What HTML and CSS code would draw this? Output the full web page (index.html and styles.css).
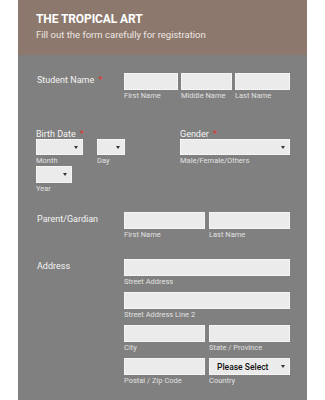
FILE: index.html
```html
<!DOCTYPE html>
<html lang="en">
<head>
    <meta charset="UTF-8">
    <meta name="viewport" content="width=device-width, initial-scale=1.0">
    <title>The Tropical Art - Registration</title>
    <link rel="stylesheet" href="styles.css">
</head>
<body>
    <div class="form-container">
        <div class="form-header">
            <h1>THE TROPICAL ART</h1>
            <p>Fill out the form carefully for registration</p>
        </div>
        <form class="form-body" action="#" method="POST">
            <div class="form-row row-student">
                <label class="row-label">Student Name <span class="req">*</span></label>
                <div class="row-fields">
                    <div class="field w-first">
                        <input type="text">
                        <span class="sub">First Name</span>
                    </div>
                    <div class="field w-middle">
                        <input type="text">
                        <span class="sub">Middle Name</span>
                    </div>
                    <div class="field w-last">
                        <input type="text">
                        <span class="sub">Last Name</span>
                    </div>
                </div>
            </div>

            <div class="form-row row-split">
                <div class="col-birth">
                    <label class="top-label">Birth Date <span class="req">*</span></label>
                    <div class="birth-fields">
                        <div class="field w-month">
                            <span class="select-wrap"><select></select></span>
                            <span class="sub">Month</span>
                        </div>
                        <div class="field w-day">
                            <span class="select-wrap"><select></select></span>
                            <span class="sub">Day</span>
                        </div>
                    </div>
                    <div class="field w-year">
                        <span class="select-wrap"><select></select></span>
                        <span class="sub">Year</span>
                    </div>
                </div>
                <div class="col-gender">
                    <label class="top-label">Gender <span class="req">*</span></label>
                    <div class="field">
                        <span class="select-wrap"><select></select></span>
                        <span class="sub">Male/Female/Others</span>
                    </div>
                </div>
            </div>

            <div class="form-row row-parent">
                <label class="row-label">Parent/Gardian</label>
                <div class="row-fields">
                    <div class="field w-half">
                        <input type="text">
                        <span class="sub">First Name</span>
                    </div>
                    <div class="field w-half">
                        <input type="text">
                        <span class="sub">Last Name</span>
                    </div>
                </div>
            </div>

            <div class="form-row row-address">
                <label class="row-label">Address</label>
                <div class="address-fields">
                    <div class="field">
                        <input type="text">
                        <span class="sub">Street Address</span>
                    </div>
                    <div class="field">
                        <input type="text">
                        <span class="sub">Street Address Line 2</span>
                    </div>
                    <div class="row-fields">
                        <div class="field w-half">
                            <input type="text">
                            <span class="sub">City</span>
                        </div>
                        <div class="field w-half">
                            <input type="text">
                            <span class="sub">State / Province</span>
                        </div>
                    </div>
                    <div class="row-fields">
                        <div class="field w-half">
                            <input type="text">
                            <span class="sub">Postal / Zip Code</span>
                        </div>
                        <div class="field w-half">
                            <span class="select-wrap">
                                <select class="country"><option>Please Select</option></select>
                            </span>
                            <span class="sub">Country</span>
                        </div>
                    </div>
                </div>
            </div>
        </form>
    </div>
</body>
</html>
```

FILE: styles.css
```css
body {
    margin: 0;
    background: #fff;
    font-family: Roboto, "Liberation Sans", Arial, sans-serif;
}

.form-container {
    margin: 0 18px;
    min-height: 400px;
    background: #808080;
}

.form-header {
    background: #8c786c;
    padding: 12px 18px 14px;
    color: #fff;
}
.form-header h1 {
    margin: 0;
    font-size: 12px;
    line-height: 15px;
    font-weight: bold;
    letter-spacing: -0.1px;
}
.form-header p {
    margin: 1px 0 0;
    font-size: 9.5px;
    line-height: 13px;
    color: #ece6e2;
}

.form-body {
    padding: 18px 17px 20px 18px;
    display: flex;
    flex-direction: column;
}

.form-row {
    display: flex;
}

.row-label {
    width: 88px;
    flex-shrink: 0;
    font-size: 9px;
    line-height: 12px;
    color: #f4f4f4;
    padding: 1px 0 0 1px;
    box-sizing: border-box;
}
.top-label {
    display: block;
    font-size: 9px;
    line-height: 12px;
    color: #f4f4f4;
}
.req {
    color: #e0322c;
    margin-left: 2px;
}

.row-fields {
    display: flex;
    gap: 4px;
}
.row-student .row-fields {
    gap: 3px;
}

.field {
    display: flex;
    flex-direction: column;
}
.field input,
.field select {
    display: block;
    width: 100%;
    height: 17px;
    margin: 0;
    padding: 0 0 0 6px;
    box-sizing: border-box;
    background: #ebebeb;
    border: 1px dotted #fff;
    border-radius: 0;
    font-family: "Liberation Sans", Arial, sans-serif;
    font-size: 9px;
    color: #111;
    outline: none;
    -webkit-appearance: none;
    appearance: none;
}
.sub {
    font-size: 7.5px;
    line-height: 11px;
    color: #e0e0e0;
    white-space: nowrap;
}

.select-wrap {
    position: relative;
    display: block;
}
.select-wrap::after {
    content: "";
    position: absolute;
    right: 5px;
    top: 7px;
    border-left: 2px solid transparent;
    border-right: 2px solid transparent;
    border-top: 3px solid #333;
    pointer-events: none;
}

.w-first { width: 54px; }
.w-middle { width: 51px; }
.w-last { width: 55px; }
.w-half { width: 81px; }
.w-month { width: 47px; }
.w-day { width: 28px; }
.w-year { width: 36px; }

/* birth date / gender */
.row-split {
    margin-top: 27px;
}
.col-birth {
    width: 144px;
    flex-shrink: 0;
}
.col-gender {
    width: 110px;
}
.birth-fields {
    display: flex;
    gap: 14px;
    margin-top: -1px;
}
.col-gender .field {
    margin-top: -1px;
}
.row-split .select-wrap select {
    height: 16px;
}
.w-year select {
    height: 17px !important;
}

.row-parent {
    margin-top: 18px;
}

.row-address {
    margin-top: 19px;
}
.address-fields {
    width: 166px;
    display: flex;
    flex-direction: column;
    gap: 5px;
}
.field .country {
    padding-left: 7px;
    font-family: Roboto, "Liberation Sans", Arial, sans-serif;
    font-size: 8.5px;
    font-weight: 500;
    color: #111;
}
```
